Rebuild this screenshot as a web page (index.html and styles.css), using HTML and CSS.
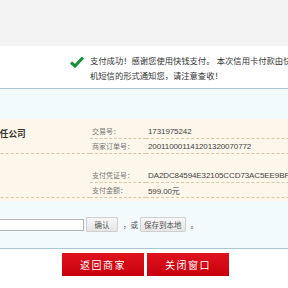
FILE: index.html
```html
<!DOCTYPE html>
<html lang="zh-CN">

<head>
    <meta charset="UTF-8">
    <meta name="viewport" content="width=device-width, initial-scale=1.0">
    <title>支付结果</title>
    <link rel="stylesheet" href="styles.css">
</head>

<body>
    <div class="top-bar"></div>

    <div class="notice">
        <svg class="ok-icon" width="14" height="12" viewBox="0 0 14 12">
            <path d="M1 6.5 L5 10 L13 1.5" fill="none" stroke="#16913a" stroke-width="3" stroke-linejoin="miter" />
        </svg>
        <p>支付成功！感谢您使用快钱支付。 本次信用卡付款由快钱以手<br>机短信的形式通知您，请注意查收！</p>
    </div>

    <div class="panel">
        <div class="order-box">
            <table class="order-info">
                <colgroup>
                    <col class="col-merchant">
                    <col class="col-label">
                    <col class="col-value">
                </colgroup>
                <tr>
                    <td class="merchant line" rowspan="2">有限责任公司</td>
                    <td class="label line">交易号：</td>
                    <td class="value line">1731975242</td>
                </tr>
                <tr>
                    <td class="label line">商家订单号：</td>
                    <td class="value line">200110001141201320070772</td>
                </tr>
                <tr class="blank">
                    <td></td>
                    <td></td>
                    <td></td>
                </tr>
                <tr>
                    <td class="line" rowspan="2"></td>
                    <td class="label line">支付凭证号：</td>
                    <td class="value line">DA2DC84594E32105CCD73AC5EE9BF7A2</td>
                </tr>
                <tr>
                    <td class="label line">支付金额：</td>
                    <td class="value line">599.00元</td>
                </tr>
            </table>
        </div>

        <div class="save-row">
            <input type="text" class="save-input">
            <button class="btn-gray btn-ok">确认</button>
            <span class="sep">，或</span>
            <button class="btn-gray">保存到本地</button>
            <span class="sep">。</span>
        </div>
    </div>

    <div class="actions">
        <button class="btn-red">返回商家</button>
        <button class="btn-red">关闭窗口</button>
    </div>
</body>

</html>
```

FILE: styles.css
```css
html,
body {
    margin: 0;
    padding: 0;
    overflow: hidden;
}

body {
    font-family: "Liberation Sans", "Noto Sans CJK SC", sans-serif;
    background: #fff;
    color: #333;
    width: 288px;
}

.top-bar {
    height: 46px;
    background: #f3f3f3;
}

.notice {
    display: flex;
    align-items: flex-start;
    height: 42px;
    padding-left: 70px;
}

.ok-icon {
    margin-top: 10px;
    flex-shrink: 0;
}

.notice p {
    margin: 8px 0 0 6px;
    font-size: 8.3px;
    line-height: 15px;
    color: #333;
    white-space: nowrap;
}

.panel {
    border-top: 1px solid #a9c6d3;
    border-bottom: 1px solid #a9c6d3;
    background: #f3fafd;
    padding-top: 30px;
}

.order-box {
    background: #fdf6ea;
    padding: 5px 0 3px;
    overflow: hidden;
}

.order-info {
    table-layout: fixed;
    width: 420px;
    border-collapse: collapse;
    margin-left: -30px;
    white-space: nowrap;
}

.col-merchant {
    width: 120px;
}

.col-label {
    width: 56px;
}

.col-value {
    width: 244px;
}

.order-info td {
    height: 14px;
    padding: 0 0 0 2px;
    vertical-align: middle;
    overflow: hidden;
}

.order-info td.line {
    border-bottom: 1px dashed #d8c6a6;
}

.merchant {
    padding: 3px 0 0 4px !important;
    font-size: 8.6px;
    font-weight: bold;
    color: #333;
    vertical-align: top !important;
}

.label {
    font-size: 7px;
    color: #777;
}

.value {
    font-size: 8px;
    letter-spacing: -0.1px;
    color: #444;
}

.save-row {
    display: flex;
    align-items: center;
    height: 47px;
    font-size: 7.5px;
    color: #555;
}

.save-input {
    width: 90px;
    height: 10px;
    margin: 0 2px 0 -8px;
    border: 1px solid #b5b5b5;
    padding: 0;
    background: #fff;
}

.btn-gray {
    height: 15px;
    padding: 0 3px;
    border: 1px solid #cfcfcf;
    border-radius: 1px;
    background: linear-gradient(#f7f7f7, #e6e6e6);
    font-family: inherit;
    font-size: 7.5px;
    color: #555;
}

.btn-ok {
    width: 32px;
}

.sep {
    margin: 0 2px 0 5px;
}

.actions {
    display: flex;
    justify-content: center;
    gap: 3px;
    padding: 4px 0 0 3px;
}

.btn-red {
    width: 82px;
    height: 23px;
    border: none;
    background: linear-gradient(#e0121e, #c8000d);
    color: #fff;
    font-family: inherit;
    font-size: 10px;
    letter-spacing: 1.5px;
    cursor: pointer;
}
```
